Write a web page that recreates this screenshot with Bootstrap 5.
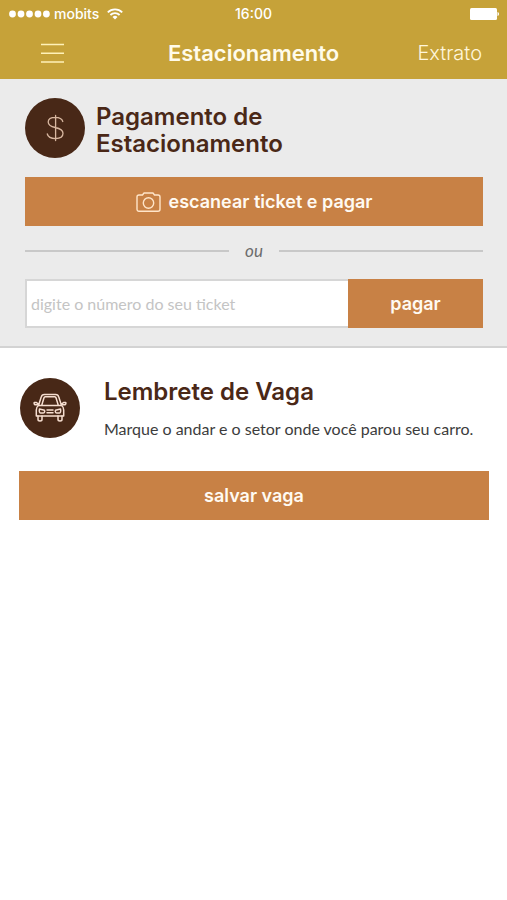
<!DOCTYPE html>
<html lang="pt-BR">
<head>
<meta charset="utf-8">
<meta name="viewport" content="width=device-width, initial-scale=1">
<title>Estacionamento</title>
<link href="https://cdn.jsdelivr.net/npm/bootstrap@5.3.0/dist/css/bootstrap.min.css" rel="stylesheet">
<style>
  body { font-family: Lato, "Liberation Sans", sans-serif; font-variant-ligatures: none; color: #3c3c3c; background: #fff; }
  .app-header { background: #c6a239; color: #fffbea; }
  .status-bar { height: 27px; padding: 0 8px; font: 500 14px/27px Inter, sans-serif; color: #fff; }
  .side { flex: 1 1 0; }
  .title-bar { height: 52px; padding: 0 25px; }
  .screen-title { font: 600 22px/28px Inter, sans-serif; }
  .menu-btn { line-height: 0; }
  .extrato-link { font: 300 20px/28px Inter, sans-serif; color: #fff6dc; }
  .payment { background: #ebebeb; border-bottom: 2px solid #d3d3d3; padding: 19px 24px 18px 25px; }
  .payment-head { margin-bottom: 19px; }
  .section-title { font: 600 24px/27px Inter, sans-serif; color: #4a2817; }
  .payment-head .section-title { padding: 3px 0 0 3px; }
  .round-icon { width: 60px; height: 60px; flex: none; background: #482817; }
  .btn-copper { background: #c88145; color: #fffaf2; font: 600 18px/24px Inter, sans-serif; height: 49px; }
  .btn-copper:hover, .btn-copper:active { background: #b87238; color: #fff; }
  .or-row { margin: 13px 0 16px; }
  .or-line { height: 2px; background: #c8c8c8; }
  .or-text { font-size: 17px; line-height: 24px; color: #6c6c6c; }
  .ticket-input { border: 2px solid #d6d6d6; border-right: 0; height: 49px; padding: 8px 4px; font-size: 16px; line-height: 24px; }
  .ticket-input::placeholder { color: #c4c4c4; }
  .pay-btn { width: 135px; }
  .reminder { padding: 30px 18px 30px 19px; }
  .reminder-head { margin-bottom: 30px; padding-left: 1px; }
  .reminder-text { font-size: 16px; line-height: 24px; }
</style>
<script src="https://cdn.jsdelivr.net/npm/bootstrap@5.3.0/dist/js/bootstrap.bundle.min.js" defer></script>
</head>
<body>
<header class="app-header">
  <div class="status-bar d-flex align-items-center">
    <div class="side d-flex align-items-center">
      <svg class="me-1" width="42" height="8" viewBox="0 0 42 8" fill="#fff" aria-hidden="true"><circle cx="4.500" cy="4" r="3.400"/><circle cx="13" cy="4" r="3.400"/><circle cx="21.500" cy="4" r="3.400"/><circle cx="30" cy="4" r="3.400"/><circle cx="38.400" cy="4" r="3.400"/></svg>
      <span class="me-2">mobits</span>
      <svg width="16" height="12" viewBox="0 0 16 12" fill="none" stroke="#fff" stroke-width="1.800" aria-hidden="true"><path d="M.8 4.400a10.200 10.200 0 0 1 14.400 0M3.400 7a6.500 6.500 0 0 1 9.200 0"/><path d="M8 11.600 5.500 9a3.500 3.500 0 0 1 5 0z" fill="#fff" stroke="none"/></svg>
    </div>
    <span>16:00</span>
    <div class="side d-flex justify-content-end">
      <svg width="30" height="12" viewBox="0 0 30 12" fill="#fff" aria-hidden="true"><rect x="1" width="27" height="12" rx="1.500"/><path d="M28.500 4c2 .6 2 3.400 0 4z"/></svg>
    </div>
  </div>
  <nav class="title-bar d-flex align-items-center" aria-label="Principal">
    <div class="side">
      <button type="button" class="menu-btn btn p-0 ms-3 border-0" aria-label="Menu"><svg width="24" height="22" viewBox="0 0 24 22" stroke="#fff1b8" stroke-width="1.600"><path d="M0 1.500h23M0 10.300h23M0 19h23"/></svg></button>
    </div>
    <h1 class="screen-title m-0">Estacionamento</h1>
    <div class="side text-end"><a href="#extrato" class="extrato-link text-decoration-none">Extrato</a></div>
  </nav>
</header>
<main>
  <section class="payment">
    <div class="payment-head d-flex align-items-center">
      <span class="round-icon rounded-circle d-flex align-items-center justify-content-center">
        <svg width="20" height="28" viewBox="0 0 20 28" fill="none" stroke="#d8b7a0" stroke-width="1.300" stroke-linecap="round" aria-hidden="true"><path d="M17.800 7.500C16.800 4.300 14 3.300 10.500 3.300 6 3.300 3.200 5 3.200 8c0 3.600 3.300 4.700 7 5.500 4 .9 7.800 2 7.800 5.800 0 3.500-3.200 5.300-7.500 5.300S3 23 2.300 20M10.600 1.500v25"/></svg>
      </span>
      <h2 class="section-title m-0 ms-2">Pagamento de<br>Estacionamento</h2>
    </div>
    <button type="button" class="btn btn-copper rounded-0 border-0 w-100 d-flex align-items-center justify-content-center gap-2">
      <svg width="25" height="20" viewBox="0 0 25 20" fill="none" stroke="#ffe5c9" stroke-width="1.400" stroke-linejoin="round" aria-hidden="true"><path d="M1 5a2 2 0 0 1 2-2h3.500l1.500-2h9l1.500 2H22a2 2 0 0 1 2 2v12.300a2 2 0 0 1-2 2H3a2 2 0 0 1-2-2z"/><circle cx="12.500" cy="11" r="5.200"/></svg>
      escanear ticket e pagar
    </button>
    <div class="or-row d-flex align-items-center">
      <span class="or-line flex-fill"></span><em class="or-text px-3">ou</em><span class="or-line flex-fill"></span>
    </div>
    <form class="d-flex">
      <input type="text" class="form-control ticket-input rounded-0" aria-label="Número do ticket" placeholder="digite o número do seu ticket">
      <button type="button" class="btn btn-copper pay-btn rounded-0 border-0 flex-shrink-0">pagar</button>
    </form>
  </section>
  <section class="reminder">
    <div class="reminder-head d-flex align-items-start">
      <span class="round-icon rounded-circle d-flex align-items-center justify-content-center">
        <svg width="34" height="30" viewBox="0 0 34 30" fill="none" stroke="#f6ded0" stroke-width="1.500" stroke-linejoin="round" stroke-linecap="round" aria-hidden="true"><path d="M5.500 12.500 8.200 4C8.700 2.200 9.500 1.500 11.300 1.500h11.400c1.800 0 2.600.7 3.100 2.500l2.700 8.500M8.800 12l2.200-7.300c.2-.7.500-1 1.200-1h9.600c.7 0 1 .3 1.200 1l2.200 7.300M5.500 12.500h23c1.500 1 2.200 2.500 2.200 4.500v6H3.300v-6c0-2 .7-3.500 2.200-4.500zM5.600 11.400 3.500 9.500H1.200c-.4 1.400.3 2.300 1.800 2.300h2.300M28.400 11.400l2.100-1.900h2.300c.4 1.400-.3 2.300-1.800 2.300h-2.300"/><path d="M5 23v3.500c0 2 4 2 4 0V23M25 23v3.500c0 2 4 2 4 0V23M6.500 16l5 1.300c.6 2-.3 2.800-1.500 2.800H7.500c-1 0-1.500-2-1-4.100zM27.500 16l-5 1.300c-.6 2 .3 2.800 1.500 2.800h2.500c1 0 1.500-2 1-4.100zM14 17h6M14 19.700h6"/></svg>
      </span>
      <div class="ms-4">
        <h2 class="section-title m-0 mb-2 pb-1">Lembrete de Vaga</h2>
        <p class="reminder-text m-0">Marque o andar e o setor onde você parou seu carro.</p>
      </div>
    </div>
    <button type="button" class="btn btn-copper rounded-0 border-0 w-100">salvar vaga</button>
  </section>
</main>
</body>
</html>
